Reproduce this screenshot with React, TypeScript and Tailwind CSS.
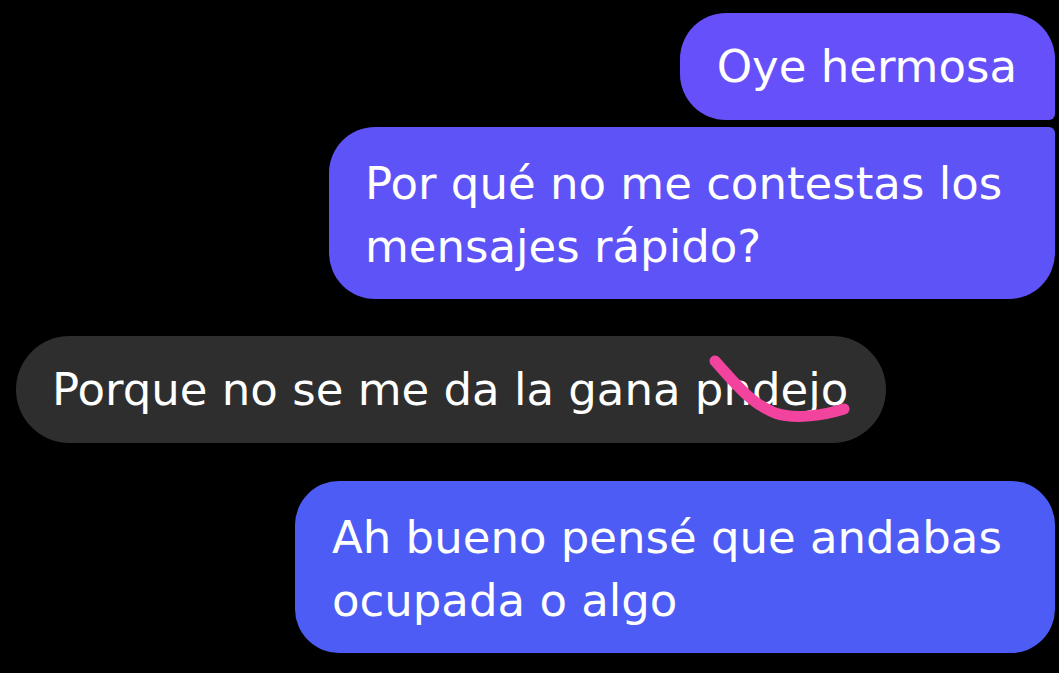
const font = { fontFamily: '"DejaVu Sans", "Liberation Sans", sans-serif' };

const Scribble = () => (
    <svg
        className="absolute left-0 top-[-10px] overflow-visible pointer-events-none"
        width="160"
        height="70"
        viewBox="0 0 160 70"
    >
        <path
            d="M20 8 C 40 30 55 50 80 60 C 100 67 130 62 149 56"
            fill="none"
            stroke="#f2449f"
            strokeWidth="11"
            strokeLinecap="round"
        />
    </svg>
);

export default function App() {
    return (
        <div className="w-full h-screen bg-black overflow-hidden text-white" style={font}>
            <div className="flex flex-col pt-[13px] pl-[16px] pr-[4px] text-[45px] leading-[63px]">
                {/* outgoing group */}
                <div className="self-end bg-[#6650fa] rounded-[46px] rounded-br-[6px] pl-[37px] pr-[38px] py-[22px] whitespace-nowrap">
                    Oye hermosa
                </div>
                <div className="self-end mt-[7px] w-[726px] bg-[#5d53f7] rounded-[46px] rounded-tr-[6px] pl-[36px] pt-[25px] pb-[21px] whitespace-nowrap">
                    Por qué no me contestas los
                    <br />
                    mensajes rápido?
                </div>

                {/* incoming */}
                <div className="self-start mt-[37px] bg-[#2e2e2e] rounded-full pl-[36px] pr-[38px] py-[22px] whitespace-nowrap">
                    Porque no se me da la gana{' '}
                    <span className="relative">
                        pndejo
                        <Scribble />
                    </span>
                </div>

                {/* outgoing */}
                <div className="self-end mt-[38px] w-[760px] bg-[#4c5cf5] rounded-[44px] pl-[37px] pt-[25px] pb-[21px] whitespace-nowrap">
                    Ah bueno pensé que andabas
                    <br />
                    ocupada o algo
                </div>
            </div>
        </div>
    );
}
